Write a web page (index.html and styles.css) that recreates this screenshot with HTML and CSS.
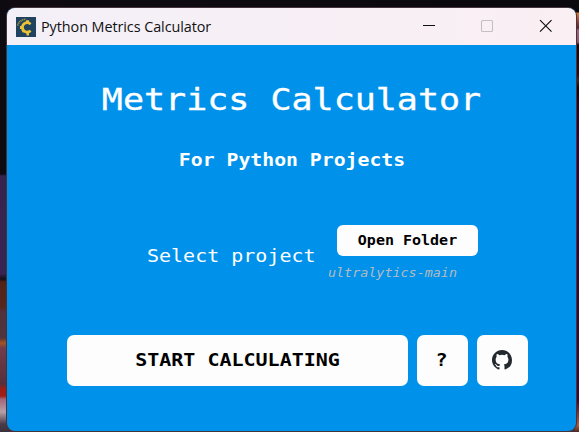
FILE: index.html
```html
<!DOCTYPE html>
<html lang="en">
<head>
<meta charset="utf-8">
<title>Python Metrics Calculator</title>
<link rel="stylesheet" href="styles.css">
</head>
<body>
<div class="window">
  <header class="titlebar">
    <svg class="app-icon" viewBox="0 0 20 20">
      <rect width="20" height="20" fill="#20435f"/>
      <path d="M14.5 7.1A4.7 4.7 0 1 0 14.5 13.6" fill="none" stroke="#eac235" stroke-width="2.8"/>
      <path d="M10 3.2h3v3h-3zM12.7 5.7l2.2.2-.8 2.2zM4 9h3v3H4zM5.5 13.5l2-1 1.4 2-2 1.2zM10 14.5h3v4h-2.4zM13 13l2 1.2-1.4 2z" fill="#eac235"/>
      <path d="M1.7 8.6Q3 2.8 10 2.2" fill="none" stroke="#a7973f" stroke-width="1.6" stroke-dasharray="1.2 .6"/>
    </svg>
    <span class="caption">Python Metrics Calculator</span>
    <svg class="controls" viewBox="0 0 134 20">
      <path d="M1 8.500h12" stroke="#111" stroke-width="1"/>
      <rect x="59.5" y="3.5" width="11" height="11" rx="1" fill="none" stroke="#c5bfc3" stroke-width="1.1"/>
      <path d="M118 3.200l11.5 11.5M129.500 3.200l-11.500 11.500" stroke="#111" stroke-width="1.2"/>
    </svg>
  </header>
  <main class="content">
    <h1><span class="mono">Metrics Calculator</span></h1>
    <h2><span class="mono">For Python Projects</span></h2>
    <section class="project">
      <label><span class="mono">Select project</span></label>
      <div class="picker">
        <button class="open"><span class="mono">Open Folder</span></button>
        <em><span class="mono">ultralytics-main</span></em>
      </div>
    </section>
    <footer class="actions">
      <button class="start"><span class="mono">START CALCULATING</span></button>
      <button class="square"><span class="mono">?</span></button>
      <button class="square" aria-label="GitHub">
        <svg class="github" viewBox="0 0 16 16"><path fill="#24292f" d="M8 0C3.58 0 0 3.58 0 8c0 3.54 2.29 6.53 5.47 7.59.4.07.55-.17.55-.38 0-.19-.01-.82-.01-1.49-2.01.37-2.53-.49-2.69-.94-.09-.23-.48-.94-.82-1.13-.28-.15-.68-.52-.01-.53.63-.01 1.08.58 1.23.82.72 1.21 1.87.87 2.33.66.07-.52.28-.87.51-1.07-1.78-.2-3.64-.89-3.64-3.95 0-.87.31-1.59.82-2.15-.08-.2-.36-1.02.08-2.12 0 0 .67-.21 2.2.82a7.6 7.6 0 0 1 4 0c1.53-1.04 2.2-.82 2.2-.82.44 1.1.16 1.92.08 2.12.51.56.82 1.27.82 2.15 0 3.07-1.87 3.75-3.65 3.95.29.25.54.73.54 1.48 0 1.07-.01 1.93-.01 2.2 0 .21.15.46.55.38A8.01 8.01 0 0 0 16 8c0-4.42-3.58-8-8-8z"/></svg>
      </button>
    </footer>
  </main>
</div>
</body>
</html>
```
FILE: styles.css
```css
* { box-sizing: border-box; }
body {
  margin: 0;
  width: 579px;
  height: 432px;
  overflow: hidden;
  padding: 8px 3px 1px 7px;
  background:
    linear-gradient(#09080c 0 12px, #d57637 13px, #a5483c 20px, #5d2230 28px, #a0617a 30px, #94546e 42px, #160509 45px, #300911 75px, #342b2d 80px, #180208 88px, #2b0227 110px, #350039 140px, #3a0734 400px, #b05a3c 425px, #492a25) right / 4px 100% no-repeat,
    linear-gradient(#0d0a10 0 174px, #37244e 176px, #382451 274px, #140f19 279px, #532319 282px, #55281c 307px, #51323c 312px, #51343e 338px, #a35423 343px, #733c4a 348px, #55303a 384px, #a01d16 389px, #a11d17 396px, #a26579 399px, #b7a0a7 412px, #4b3b48 424px, #38313b) left / 8px 100% no-repeat,
    linear-gradient(90deg, #100b13, #09080c) top / 100% 20px no-repeat,
    #48303a;
}
.window {
  height: 423px;
  border-radius: 8px;
  overflow: hidden;
  background: #0092eb;
  box-shadow: 0 0 0 1px #44343c;
}
.titlebar {
  display: flex;
  align-items: center;
  height: 37px;
  padding: 0 20px 0 9px;
  background: linear-gradient(90deg, #f4f0f8, #faeff3);
}
.app-icon { width: 20px; height: 20px; }
.caption {
  margin-left: 5px;
  font: 14.4px "Open Sans", "Noto Sans", sans-serif;
  letter-spacing: -.07px;
  color: #111;
  white-space: nowrap;
}
.controls { width: 134px; height: 20px; margin-left: auto; }
.content {
  display: flex;
  flex-direction: column;
  align-items: center;
  color: #fff;
  font-family: "DejaVu Sans Mono", monospace;
}
.mono { display: inline-block; white-space: pre; transform: scaleY(.88); }
h1 { margin: 33px 0 0; height: 42px; font-size: 35px; font-weight: 400; line-height: 42px; -webkit-text-stroke: .4px #fff; }
h2 { margin: 29px 0 0 1px; height: 24px; font-size: 19.8px; line-height: 24px; }
.project { display: flex; align-self: flex-start; margin: 52px 0 0 140px; }
label { width: 187px; padding-top: 19px; font-size: 20px; line-height: 24px; }
.picker { display: flex; flex-direction: column; }
em { margin: 8px 0 0 -6px; color: #b5bac0; font-size: 13.4px; line-height: 18px; }
button {
  display: flex;
  align-items: center;
  justify-content: center;
  border: 0;
  padding: 0;
  border-radius: 7px;
  background: #fdfdfd;
  color: #000;
  font: bold 20px "DejaVu Sans Mono", monospace;
}
.open { width: 141px; height: 31px; margin-left: 3px; border-radius: 6px; font-size: 15px; }
.actions { display: flex; align-self: flex-start; gap: 9px; margin: 53px 0 0 60px; }
.start { width: 341px; height: 51px; padding-bottom: 2px; }
.square { width: 51px; height: 51px; padding: 0 2px 2px 0; }
.github { width: 20px; height: 20px; }
```
